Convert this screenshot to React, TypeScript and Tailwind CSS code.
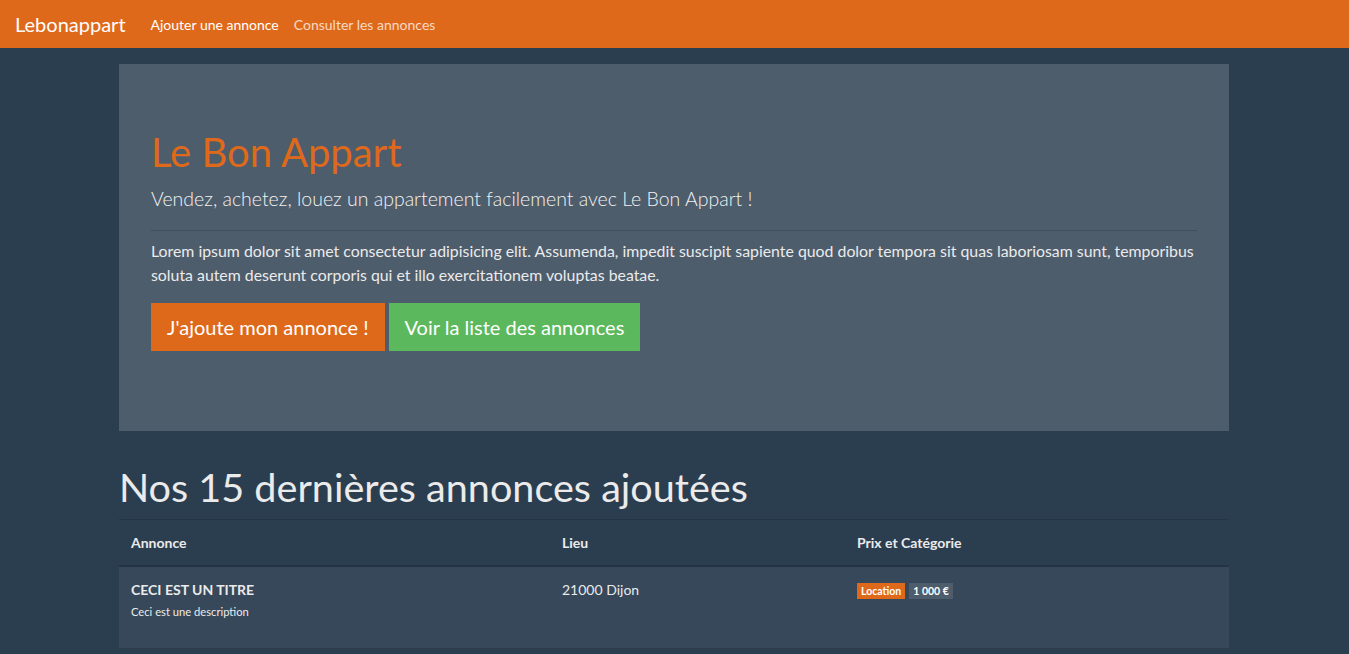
import React from "react";

export default function App() {
  return (
    <div className="min-h-[654px] bg-[#2B3E50] font-[Lato,'Liberation_Sans',sans-serif] text-[#EBEBEB] text-[15px] leading-[1.5]">
      <nav className="h-12 bg-[#DF691A] flex items-center pl-[15px] pr-4">
        <span className="text-[20px] text-white mr-[17px] leading-[30px]">Lebonappart</span>
        <a className="px-2 text-[14px] text-white">Ajouter une annonce</a>
        <a className="pl-[7px] pr-2 text-[14px] text-white/75">Consulter les annonces</a>
      </nav>
      <div className="w-[1110px] ml-[119px] pt-4">
        <div className="bg-[#4E5D6C] px-8 pt-16 pb-20">
          <h1 className="text-[40px] leading-[48px] text-[#DF691A] mb-2">Le Bon Appart</h1>
          <p className="text-[19.5px] leading-[30px] font-light text-[#F2F2F2] mb-4">
            Vendez, achetez, louez un appartement facilement avec Le Bon Appart !
          </p>
          <hr className="border-t border-black/15 mb-2" />
          <p className="text-[15.85px] leading-[24px] mb-4">
            Lorem ipsum dolor sit amet consectetur adipisicing elit. Assumenda, impedit suscipit sapiente quod dolor tempora sit quas laboriosam sunt, temporibus soluta autem deserunt corporis qui et illo exercitationem voluptas beatae.
          </p>
          <div className="flex gap-1">
            <a className="h-12 px-4 flex items-center bg-[#DF691A] text-white text-[20px]">J'ajoute mon annonce !</a>
            <a className="h-12 px-4 flex items-center bg-[#5CB85C] text-white text-[20px]">Voir la liste des annonces</a>
          </div>
        </div>
        <h1 className="mt-8 text-[39.6px] leading-[48px] mb-2">Nos 15 dernières annonces ajoutées</h1>
        <div className="border-t border-black/15 text-[14px] leading-[21px]">
          <div className="flex border-b-2 border-black/15 h-[47px] items-center font-bold">
            <div className="w-[431px] px-3">Annonce</div>
            <div className="w-[295px] px-3">Lieu</div>
            <div className="flex-1 px-3">Prix et Catégorie</div>
          </div>
          <div className="flex bg-white/5 h-[82px] items-start pt-3 border-b border-black/15">
            <div className="w-[431px] px-3">
              <div className="font-bold">CECI EST UN TITRE</div>
              <div className="text-[11.2px] leading-[17px] mt-[3px]">Ceci est une description</div>
            </div>
            <div className="w-[295px] px-3">21000 Dijon</div>
            <div className="flex-1 px-3 flex gap-1 pt-[4px]">
              <span className="bg-[#DF691A] text-white text-[10.5px] font-bold px-[4px] leading-[16px] h-4">Location</span>
              <span className="bg-[#4E5D6C] text-white text-[10.5px] font-bold px-[4px] leading-[16px] h-4">1 000 €</span>
            </div>
          </div>
        </div>
      </div>
    </div>
  );
}
